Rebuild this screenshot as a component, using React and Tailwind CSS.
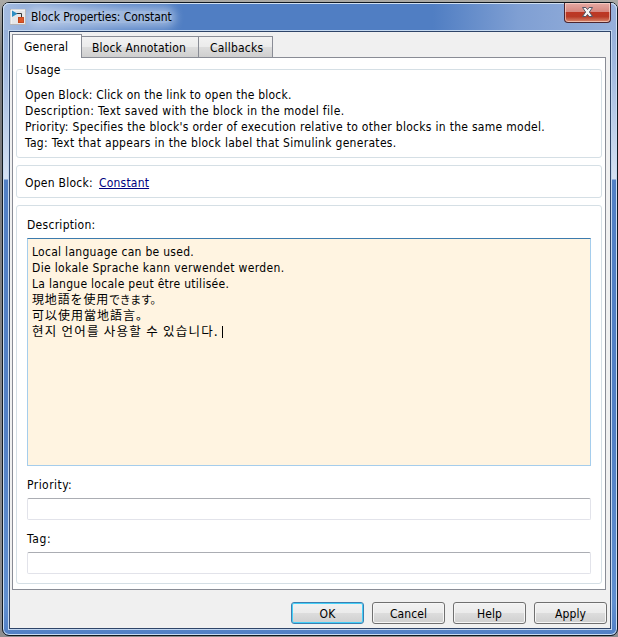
import React from 'react';

const usage = [
  ['Open Block: Click on the link to open the block.', 'tracking-[0.22px]'],
  ['Description: Text saved with the block in the model file.', 'tracking-[0.34px]'],
  ["Priority: Specifies the block's order of execution relative to other blocks in the same model.", 'tracking-[0.29px]'],
  ['Tag: Text that appears in the block label that Simulink generates.', 'tracking-[0.3px]'],
];

function AppIcon() {
  return (
    <svg width="16" height="16" viewBox="0 0 16 16" className="block shrink-0">
      <rect x="0.5" y="0.5" width="15" height="15" fill="#e6e7e9" stroke="#b4b4b6" />
      <path d="M1 15V1h14" fill="none" stroke="#fbfbfb" />
      <path d="M6 4.5h5.5v4" fill="none" stroke="#333" strokeWidth="1" />
      <path d="M2 1.5v6.5l5.5-3.2z" fill="#2f8fc4" />
      <rect x="8.5" y="8.5" width="5" height="5" fill="#dd5322" stroke="#c2461d" />
    </svg>
  );
}

function Group({ className, children }) {
  return <div className={`relative w-[586px] rounded-[3px] border border-[#d5dfe5] ${className}`}>{children}</div>;
}

function Field() {
  return <div className="h-[22px] w-[564px] rounded-[2px] border border-[#e2e3ea] border-t-[#abadb3] bg-white" />;
}

function Button({ label, primary }) {
  return (
    <button
      className={`h-[22px] w-[73px] rounded-[3px] border bg-[linear-gradient(#f2f2f2_0%,#ebebeb_48%,#dddddd_50%,#cfcfcf_100%)] pt-px text-center leading-[20px] tracking-[0.1px] ${
        primary ? 'border-[#3c7fb1] shadow-[inset_0_0_0_1px_#45d0f8]' : 'border-[#707070] shadow-[inset_0_0_0_1px_#f6f6f6]'
      }`}
    >
      {label}
    </button>
  );
}

export default function App() {
  return (
    <div className="h-[637px] w-[618px] overflow-hidden bg-[linear-gradient(#aaa9a5_0px,#77787a_60px,#8e8e90_100%)] pl-[2px] pt-[2px] text-[12px] leading-[16px] text-black [font-family:'DejaVu_Sans_Condensed','DejaVu_Sans','Noto_Sans_CJK_JP',sans-serif] [font-stretch:condensed]">
      <div className="flex h-[634px] w-[616px] flex-col rounded-[7px] border border-[#101820] bg-[linear-gradient(#8faad6_0px,#a0b8df_60px,#d5e1f2_176px,#5280c5_177px,#5280c5_430px,#608fd0_600px,#527fc5_100%)] shadow-[inset_0_0_0_1px_#c8dcf4]">
        <div className="relative flex h-[27px] shrink-0 items-center overflow-hidden rounded-t-[6px] bg-[linear-gradient(90deg,#a5bce0_0px,#86a5d6_50px,#5d88c9_120px,#507ec3_180px,#507ec3_430px,#7f9fd3_515px,#97b0db_100%)] pl-[7px] shadow-[inset_0_1px_0_#cfdff2,inset_1px_0_0_#cfdff2,inset_-1px_0_0_#cfdff2]">
          <AppIcon />
          <div className="ml-[5px] h-[12px] rounded-full bg-white/40 leading-[12px] tracking-[-0.08px] shadow-[0_0_8px_4px_rgba(255,255,255,0.4)]">Block Properties: Constant</div>
          <button aria-label="Close" className="absolute left-[561px] top-0 flex h-[20px] w-[47px] items-center justify-center rounded-b-[4px] border border-t-0 border-[#4b2530] bg-[linear-gradient(#e6aaa4_0%,#d68880_46%,#bd3724_50%,#b83a26_72%,#d98a70_100%)] shadow-[inset_0_0_0_1px_rgba(255,225,215,0.6)]">
            <svg width="13" height="12" viewBox="0 0 13 12" className="mb-px">
              <path d="M1.5 1.5h3.4L6.5 3.6 8.1 1.5h3.4L8.4 6l3.1 4.5H8.1L6.5 8.4 4.9 10.5H1.5L4.6 6z" fill="#f6f6f6" stroke="#535666" strokeWidth="1" />
            </svg>
          </button>
        </div>
        <div className="ml-[5px] flex h-[600px] w-[604px] shrink-0 flex-col border border-[#c3d7ef]">
          <div className="flex h-[598px] w-[602px] flex-col border border-[#2e4468] bg-[#f0f0f0] pl-[2px] pt-[2px]">
            <div className="relative z-10 flex h-[24px] shrink-0 items-end">
              <div className="h-[24px] w-[70px] border border-b-0 border-[#898c95] bg-white pl-[11px] pt-[4px] tracking-[0.25px]">General</div>
              <div className="mb-px flex">
                <div className="h-[21px] w-[117px] border border-b-0 border-l-0 border-[#898c95] bg-[linear-gradient(#f2f2f2_0%,#ebebeb_48%,#dddddd_50%,#cfcfcf_100%)] pl-[10px] pt-[3px] tracking-[0.13px]">Block Annotation</div>
                <div className="h-[21px] w-[74px] border border-b-0 border-l-0 border-[#898c95] bg-[linear-gradient(#f2f2f2_0%,#ebebeb_48%,#dddddd_50%,#cfcfcf_100%)] pl-[11px] pt-[3px] tracking-[0.2px]">Callbacks</div>
              </div>
            </div>
            <div className="-mt-px flex h-[533px] w-[594px] shrink-0 flex-col border border-[#898c95] bg-white pl-[3px] pt-[11px]">
              <Group className="h-[89px] pl-[8px] pt-[17px]">
                <span className="absolute left-[6px] top-[-8px] bg-white px-[3px] tracking-[0.2px]">Usage</span>
                {usage.map(([t, c]) => (
                  <div key={t} className={`whitespace-nowrap ${c}`}>{t}</div>
                ))}
              </Group>
              <Group className="mt-[7px] flex h-[33px] items-center gap-[6px] pl-[8px] pt-[2px] tracking-[0.26px]">
                <span>Open Block:</span>
                <a className="tracking-[0.2px] text-[#000080] underline">Constant</a>
              </Group>
              <Group className="mt-[7px] h-[379px] pl-[10px] pt-[11px]">
                <div className="tracking-[0.28px]">Description:</div>
                <div className="mt-[5px] h-[228px] w-[564px] border border-[#a5cdec] border-t-[#3d7bad] bg-[#fff4e1] pl-[4px] pt-[5px]">
                  <div className="tracking-[0.29px]">Local language can be used.</div>
                  <div className="tracking-[0.34px]">Die lokale Sprache kann verwendet werden.</div>
                  <div className="tracking-[0.28px]">La langue locale peut être utilisée.</div>
                  <div className="-mt-px h-[16px] text-[12px] tracking-[0.85px] [font-family:'Noto_Sans_CJK_JP',sans-serif]">
                    現地語を使用<span className="text-[11px] tracking-[-0.4px]">できます。</span>
                  </div>
                  <div className="h-[16px] text-[12px] tracking-[1px] [font-family:'Noto_Sans_CJK_TC',sans-serif]">
                    可以使用當地語言<span className="[font-family:'Noto_Sans_CJK_JP',sans-serif]">。</span>
                  </div>
                  <div className="flex h-[16px] items-center text-[12.5px] tracking-[1.25px] [font-family:'Noto_Sans_CJK_KR',sans-serif]">
                    <span className="whitespace-nowrap">현지 언어를 사용할 수 있습니다.</span>
                    <span className="ml-[3px] mt-[2px] h-[12px] w-px bg-black" />
                  </div>
                </div>
                <div className="mt-[11px] tracking-[0.45px]">Priority:</div>
                <div className="mt-[5px]"><Field /></div>
                <div className="mt-[11px] tracking-[0.6px]">Tag:</div>
                <div className="mt-[5px]"><Field /></div>
              </Group>
            </div>
            <div className="mt-[12px] flex w-[595px] justify-end gap-[8px]">
              <Button label="OK" primary />
              <Button label="Cancel" />
              <Button label="Help" />
              <Button label="Apply" />
            </div>
          </div>
        </div>
      </div>
    </div>
  );
}
